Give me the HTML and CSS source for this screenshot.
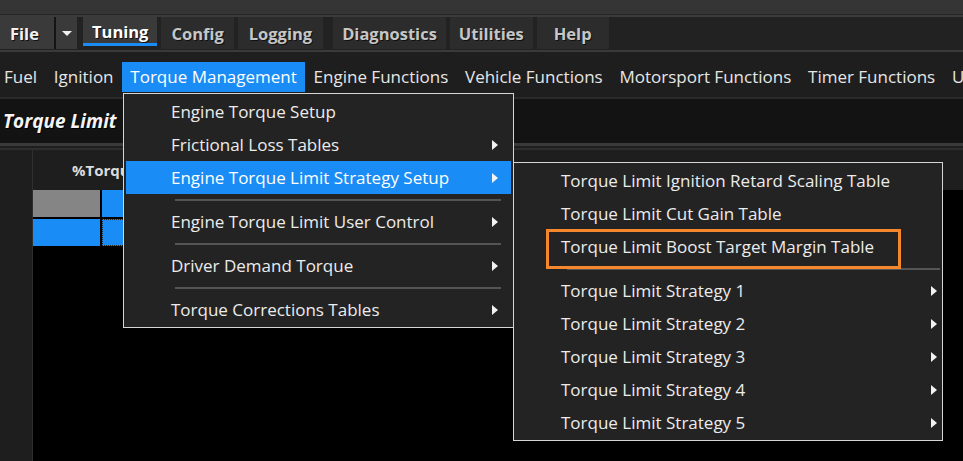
FILE: index.html
```html
<!DOCTYPE html>
<html>
<head>
<meta charset="utf-8">
<title>Tuning - Torque Limit</title>
<link rel="stylesheet" href="styles.css">
</head>
<body>
<div class="app">
  <div class="titlebar"></div>
  <div class="tabbar">
    <div class="tab tab-file">File</div>
    <div class="tab-drop"><span class="caret-down"></span></div>
    <div class="tab tab-active">Tuning</div>
    <div class="tab tab-config">Config</div>
    <div class="tab tab-logging">Logging</div>
    <div class="tab tab-gap">Diagnostics</div>
    <div class="tab">Utilities</div>
    <div class="tab tab-help">Help</div>
  </div>
  <div class="menubar">
    <span class="mb-item">Fuel</span>
    <span class="mb-item">Ignition</span>
    <span class="mb-item mb-open">Torque Management</span>
    <span class="mb-item">Engine Functions</span>
    <span class="mb-item">Vehicle Functions</span>
    <span class="mb-item">Motorsport Functions</span>
    <span class="mb-item">Timer Functions</span>
    <span class="mb-item">Utilities</span>
  </div>
  <div class="pagehead"><span class="pagetitle">Torque Limit</span></div>
  <div class="pagehead-rule"></div>
  <div class="workspace">
    <div class="sidebar"></div>
    <div class="gridpane">
      <div class="colhead"><span class="colhead-label">%Torque Limit</span></div>
      <div class="cells">
        <div class="cell-row">
          <div class="cell cell-grey"></div>
          <div class="cell cell-blue"></div>
          <div class="cell cell-blue"></div>
        </div>
        <div class="cell-row">
          <div class="cell cell-blue"></div>
          <div class="cell cell-blue cell-focus"></div>
          <div class="cell cell-blue"></div>
        </div>
      </div>
    </div>
  </div>

  <div class="menu menu-main">
    <div class="mi"><span class="mi-label">Engine Torque Setup</span></div>
    <div class="mi"><span class="mi-label">Frictional Loss Tables</span><span class="arrow"></span></div>
    <div class="mi mi-active"><span class="mi-label">Engine Torque Limit Strategy Setup</span><span class="arrow"></span></div>
    <div class="sep"></div>
    <div class="mi"><span class="mi-label">Engine Torque Limit User Control</span><span class="arrow"></span></div>
    <div class="sep"></div>
    <div class="mi"><span class="mi-label">Driver Demand Torque</span><span class="arrow"></span></div>
    <div class="sep"></div>
    <div class="mi"><span class="mi-label">Torque Corrections Tables</span><span class="arrow"></span></div>
  </div>

  <div class="menu menu-sub">
    <div class="mi"><span class="mi-label">Torque Limit Ignition Retard Scaling Table</span></div>
    <div class="mi"><span class="mi-label">Torque Limit Cut Gain Table</span></div>
    <div class="mi mi-marked"><span class="mi-label">Torque Limit Boost Target Margin Table</span><span class="mark"></span></div>
    <div class="sep"></div>
    <div class="mi"><span class="mi-label">Torque Limit Strategy 1</span><span class="arrow"></span></div>
    <div class="mi"><span class="mi-label">Torque Limit Strategy 2</span><span class="arrow"></span></div>
    <div class="mi"><span class="mi-label">Torque Limit Strategy 3</span><span class="arrow"></span></div>
    <div class="mi"><span class="mi-label">Torque Limit Strategy 4</span><span class="arrow"></span></div>
    <div class="mi"><span class="mi-label">Torque Limit Strategy 5</span><span class="arrow"></span></div>
  </div>
</div>
</body>
</html>
```

FILE: styles.css
```css
* { box-sizing: border-box; }
html, body { margin: 0; padding: 0; }
body {
  width: 963px;
  height: 461px;
  overflow: hidden;
  background: #000;
  font-family: "Open Sans", "Noto Sans", sans-serif;
}
.app {
  position: relative;
  width: 963px;
  height: 461px;
  display: flex;
  flex-direction: column;
  overflow: hidden;
}

/* window title strip */
.titlebar {
  flex: none;
  height: 15px;
  background: #353535;
  border-bottom: 1px solid #262626;
}

/* ribbon tabs */
.tabbar {
  flex: none;
  height: 35px;
  background: #222;
  border-top: 2px solid #3b3b3b;
  display: flex;
  align-items: flex-start;
  gap: 4px;
}
.tab {
  height: 32px;
  display: flex;
  align-items: center;
  justify-content: center;
  padding: 0 9px;
  background: #2c2c2c;
  color: #c6c6c6;
  font-weight: 700;
  font-size: 16.5px;
  white-space: nowrap;
  text-shadow: 1px 1px 0 #111;
}
.tab-file {
  width: 56px;
  padding-left: 10px;
  justify-content: flex-start;
  background: #3a3a3a;
  color: #f2f2f2;
  border-right: 2px solid #141414;
}
.tab-drop {
  margin-left: -4px;
  width: 21px;
  height: 32px;
  background: #3a3a3a;
  display: flex;
  align-items: center;
  justify-content: center;
}
.caret-down {
  width: 0;
  height: 0;
  border-top: 5px solid #f0f0f0;
  border-left: 5px solid transparent;
  border-right: 5px solid transparent;
}
.tab-active {
  margin-left: 2px;
  height: 29px;
  padding: 2px 9px 0;
  background: #3a3a3a;
  color: #fff;
  border-bottom: 3px solid #1a8cf5;
}
.tab-config { padding: 0 10px; }
.tab-logging { padding: 0 11px; }
.tab-gap { margin-left: 6px; }
.tab-help { padding: 0 17px; }

/* application menu bar */
.menubar {
  flex: none;
  height: 47px;
  background: #1e1e1e;
  border-top: 2px solid #3a3a3a;
  display: flex;
  align-items: flex-start;
  padding-top: 10px;
  white-space: nowrap;
}
.mb-item {
  height: 30px;
  line-height: 30px;
  padding: 0 8.4px;
  font-size: 17px;
  color: #e6e6e6;
}
.mb-item:first-child { padding-left: 4px; }
.mb-open {
  background: #1a8cf5;
  color: #fff;
}

/* page header */
.pagehead {
  flex: none;
  height: 46px;
  background: #131313;
  border-top: 2px solid #2a2a2a;
  display: flex;
  align-items: center;
  padding-left: 3px;
}
.pagetitle {
  font-size: 19px;
  font-weight: 700;
  font-style: italic;
  color: #f4f4f4;
  text-shadow: 1px 1px 0 #000;
}
.pagehead-rule {
  flex: none;
  height: 7px;
  background: #1e1e1e;
  border-top: 3px solid #3a3a3a;
  border-bottom: 2px solid #2e2e2e;
}

/* table workspace */
.workspace {
  flex: 1;
  display: flex;
}
.sidebar {
  width: 33px;
  background: #1e1e1e;
  border-right: 1px solid #2f2f2f;
}
.gridpane {
  flex: 1;
  background: #000;
}
.colhead {
  height: 40px;
  background: #1e1e1e;
  display: flex;
  align-items: center;
  padding-left: 39px;
}
.colhead-label {
  font-size: 15px;
  font-weight: 700;
  color: #dcdcdc;
}
.cells {
  display: flex;
  flex-direction: column;
  gap: 2px;
}
.cell-row {
  display: flex;
  gap: 2px;
}
.cell {
  width: 67px;
  height: 27px;
}
.cell-grey { background: #858585; }
.cell-blue { background: #1a8cf5; }
.cell-focus { border: 1px dotted #222; }

/* popup menus */
.menu {
  position: absolute;
  background: #232323;
  border: 1px solid #d6d6d6;
  padding: 1px 2px;
  color: #ececec;
  font-size: 17px;
  z-index: 5;
}
.menu-main {
  left: 123px;
  top: 93px;
  width: 391px;
}
.menu-sub {
  left: 513px;
  top: 162px;
  width: 430px;
  z-index: 6;
}
.mi {
  position: relative;
  height: 33px;
  display: flex;
  align-items: center;
  padding: 0 13px 0 45px;
  white-space: nowrap;
}
.menu-sub .mi { padding-right: 3px; }
.mi-label { flex: 1; }
.mi-active {
  background: #1a8cf5;
  color: #fff;
}
.arrow {
  width: 0;
  height: 0;
  border-left: 6px solid #f2f2f2;
  border-top: 5px solid transparent;
  border-bottom: 5px solid transparent;
}
.sep {
  height: 11px;
  display: flex;
  align-items: center;
  padding: 0 10px 0 49px;
}
.menu-sub .sep { padding: 0 0 0 51px; }
.sep::after {
  content: "";
  flex: 1;
  height: 2px;
  background: #555;
}
.mark {
  position: absolute;
  left: 30px;
  top: -1px;
  width: 355px;
  height: 40px;
  border: 3px solid #f5882c;
  z-index: 2;
}
```
